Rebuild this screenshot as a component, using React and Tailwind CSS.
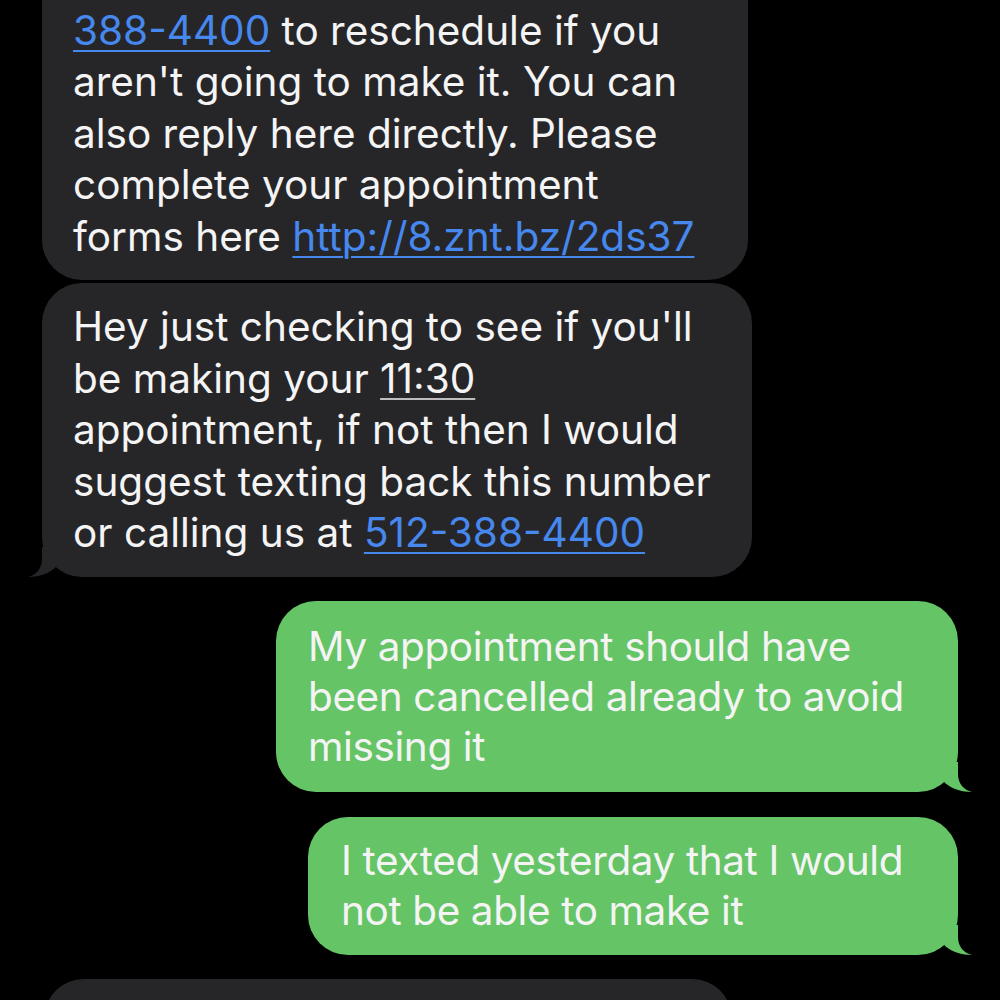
import React from 'react';

const FONT = { fontFamily: 'Inter, "Noto Sans", "Liberation Sans", sans-serif' };

// little curl at the bottom of the last bubble in a run
const Tail = ({ side, color }) => {
  if (side === 'right') {
    return (
      <svg width="40" height="30" viewBox="0 0 40 30" className="absolute bottom-0 right-[-14px]">
        <path d="M26 0 L26 12 C26 22 32 28 40 30 C30 30 20 27 13 21 L0 0 Z" fill={color} />
      </svg>
    );
  }
  return (
    <svg width="40" height="30" viewBox="0 0 40 30" className="absolute bottom-0 left-[-14px]">
      <path d="M14 0 L14 12 C14 22 8 28 0 30 C10 30 20 27 27 21 L40 0 Z" fill={color} />
    </svg>
  );
};

const Link = ({ children }) => (
  <span className="text-[#4688ee] underline decoration-2 underline-offset-[5px]">{children}</span>
);

const Detected = ({ children }) => (
  <span className="underline decoration-[#bdbdbd] decoration-2 underline-offset-[5px]">{children}</span>
);

const Lines = ({ lines, tight }) => (
  <div
    className={
      tight
        ? 'text-[40.5px] leading-[50px] tracking-[-0.4px] text-[#f4f4f4] whitespace-nowrap'
        : 'text-[40.5px] leading-[51.5px] text-[#f4f4f4] whitespace-nowrap'
    }
  >
    {lines.map((l, i) => (
      <div key={i}>{l}</div>
    ))}
  </div>
);

export default function App() {
  return (
    <div className="w-[1000px] h-[1000px] overflow-hidden bg-black" style={FONT}>
      <div className="flex flex-col -mt-[65px]">
        {/* incoming */}
        <div className="ml-[42px] w-[706px] bg-[#262629] rounded-[40px] pl-[31px] py-[18px]">
          <Lines
            lines={[
              <>Please call our office at <Link>512-</Link></>,
              <><Link>388-4400</Link> to reschedule if you</>,
              "aren't going to make it. You can",
              'also reply here directly. Please',
              'complete your appointment',
              <>forms here <Link>http://8.znt.bz/2ds37</Link></>,
            ]}
          />
        </div>

        <div className="relative mt-[3px] ml-[42px] w-[710px] bg-[#262629] rounded-[40px] pl-[31px] py-[18px]">
          <Lines
            lines={[
              "Hey just checking to see if you'll",
              <>be making your <Detected>11:30</Detected></>,
              'appointment, if not then I would',
              'suggest texting back this number',
              <>or calling us at <Link>512-388-4400</Link></>,
            ]}
          />
          <Tail side="left" color="#262629" />
        </div>

        {/* outgoing */}
        <div className="relative self-end mt-[24px] mr-[42px] w-[682px] bg-[#65c466] rounded-[40px] pl-[32px] pt-[21px] pb-[20px]">
          <Lines
            tight
            lines={[
              'My appointment should have',
              'been cancelled already to avoid',
              'missing it',
            ]}
          />
          <Tail side="right" color="#65c466" />
        </div>

        <div className="relative self-end mt-[25px] mr-[42px] w-[650px] bg-[#65c466] rounded-[40px] pl-[33px] py-[19px]">
          <Lines tight lines={['I texted yesterday that I would', 'not be able to make it']} />
          <Tail side="right" color="#65c466" />
        </div>

        <div className="mt-[24px] ml-[44px] w-[688px] h-[120px] bg-[#262629] rounded-[40px]" />
      </div>
    </div>
  );
}
